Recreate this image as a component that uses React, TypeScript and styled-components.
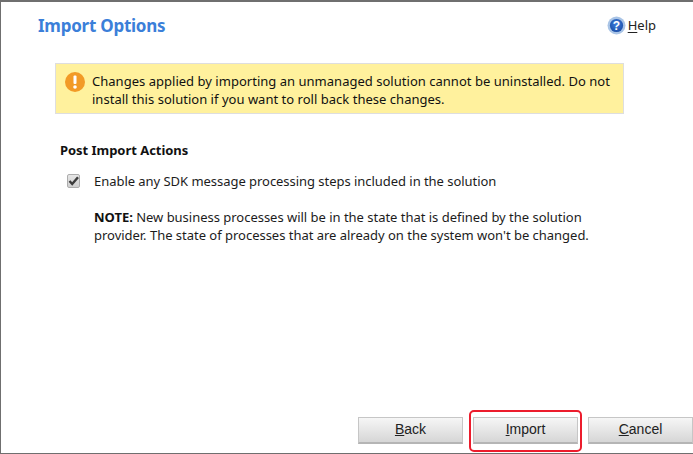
import styled, { createGlobalStyle } from 'styled-components';

const GlobalStyle = createGlobalStyle`
 html, body, #root {
  margin: 0;
  padding: 0;
  width: 693px;
  height: 454px;
  overflow: hidden;
 }
 body {
  font-family: 'Noto Sans', 'Open Sans', sans-serif;
  background: #fff;
 }
`;

const Frame = styled.div`
 box-sizing: border-box;
 display: flex;
 flex-direction: column;
 width: 693px;
 height: 454px;
 border-top: 2px solid #6f6f6f;
 border-left: 1px solid #6f6f6f;
 border-bottom: 1px solid #6f6f6f;
 overflow: hidden;
`;

const Header = styled.header`
 display: flex;
 justify-content: space-between;
 align-items: center;
 height: 46px;
 padding: 0 37px 0 37px;
`;

const Title = styled.h1`
 margin: 0;
 font-size: 17px;
 font-weight: 700;
 letter-spacing: -0.25px;
 color: #3b7fd9;
`;

const HelpLink = styled.a`
 display: flex;
 align-items: center;
 gap: 2px;
 font-size: 13px;
 color: #222;
 & u {
  text-underline-offset: 2px;
 }
`;

const Warning = styled.div`
 box-sizing: border-box;
 display: flex;
 gap: 7px;
 width: 569px;
 height: 51px;
 margin: 15px 0 0 54px;
 padding: 8px 9px;
 background: #fff19d;
 border: 1px solid #dedede;
 font-size: 13px;
 line-height: 18px;
 letter-spacing: 0.02px;
 color: #111;
 & svg {
  flex: none;
 }
`;

const Section = styled.section`
 margin: 27px 0 0 59px;
 color: #1c1c1c;
 font-size: 13px;
 letter-spacing: -0.04px;
`;

const SectionTitle = styled.h2`
 margin: 0 0 13px;
 font-size: 13px;
 line-height: 18px;
 font-weight: 700;
 color: #111;
`;

const OptionRow = styled.label`
 display: flex;
 align-items: center;
 gap: 14px;
 margin-left: 7px;
 line-height: 18px;
`;

const FakeCheck = styled.span`
 box-sizing: border-box;
 display: flex;
 align-items: center;
 justify-content: center;
 width: 13px;
 height: 14px;
 border: 1px solid #adadad;
 border-radius: 2px;
 background: linear-gradient(#e6e6e6, #cfcfcf);
`;

const Note = styled.p`
 margin: 18px 0 0 34px;
 line-height: 18px;
 letter-spacing: -0.02px;
 & b {
  color: #111;
 }
`;

const ButtonBar = styled.footer`
 display: flex;
 gap: 10px;
 margin-top: auto;
 padding: 0 0 9px 357px;
`;

const ActionButton = styled.button<{ $highlighted?: boolean }>`
 position: relative;
 flex: none;
 width: 105px;
 height: 27px;
 padding: 0 0 2px;
 border: 1px solid #c6c6c6;
 border-bottom: 2px solid #b5b5b5;
 background: linear-gradient(#f6f6f6, #d6d6d6);
 font-family: 'Liberation Sans', Arial, sans-serif;
 font-size: 14px;
 color: #222;
 ${(p) =>
  p.$highlighted &&
  `
  &::after {
   content: '';
   position: absolute;
   left: -5px;
   top: -8px;
   width: 109px;
   height: 38px;
   border: 2px solid #ec1c2c;
   border-radius: 5px;
  }
 `}
`;

const WarningIcon = () => (
 <svg width='20' height='20' viewBox='0 0 20 20'>
  <circle cx='10' cy='10' r='10' fill='#f29a26' />
  <rect x='8.5' y='3.5' width='3' height='8.5' rx='1' fill='#fff' />
  <circle cx='10' cy='15' r='1.8' fill='#fff' />
 </svg>
);

const HelpIcon = () => (
 <svg width='19' height='19' viewBox='0 0 19 19'>
  <defs>
   <radialGradient id='helpFill' cx='50%' cy='40%' r='60%'>
    <stop offset='0%' stopColor='#3f7fe0' />
    <stop offset='100%' stopColor='#1c4fa8' />
   </radialGradient>
  </defs>
  <circle cx='9.5' cy='9.5' r='9' fill='#a9c4e6' />
  <circle cx='9.5' cy='9.5' r='6.6' fill='url(#helpFill)' />
  <text x='9.5' y='13.8' textAnchor='middle' fontFamily='Liberation Sans, sans-serif' fontWeight='700' fontSize='12' fill='#fff'>
   ?
  </text>
 </svg>
);

const CheckMark = () => (
 <svg width='11' height='10' viewBox='0 0 11 10'>
  <path d='M1.5 5 L4.2 8 L10 1.2' fill='none' stroke='#3c3c3c' strokeWidth='2.4' />
 </svg>
);

export default function App() {
 return (
  <Frame>
   <GlobalStyle />
   <Header>
    <Title>Import Options</Title>
    <HelpLink>
     <HelpIcon />
     <span>
      <u>H</u>elp
     </span>
    </HelpLink>
   </Header>
   <Warning>
    <WarningIcon />
    <span>Changes applied by importing an unmanaged solution cannot be uninstalled. Do not install this solution if you want to roll back these changes.</span>
   </Warning>
   <Section>
    <SectionTitle>Post Import Actions</SectionTitle>
    <OptionRow>
     <FakeCheck>
      <CheckMark />
     </FakeCheck>
     Enable any SDK message processing steps included in the solution
    </OptionRow>
    <Note>
     <b>NOTE:</b> New business processes will be in the state that is defined by the solution
     <br />
     provider. The state of processes that are already on the system won't be changed.
    </Note>
   </Section>
   <ButtonBar>
    <ActionButton>
     <u>B</u>ack
    </ActionButton>
    <ActionButton $highlighted>
     <u>I</u>mport
    </ActionButton>
    <ActionButton>
     <u>C</u>ancel
    </ActionButton>
   </ButtonBar>
  </Frame>
 );
}
